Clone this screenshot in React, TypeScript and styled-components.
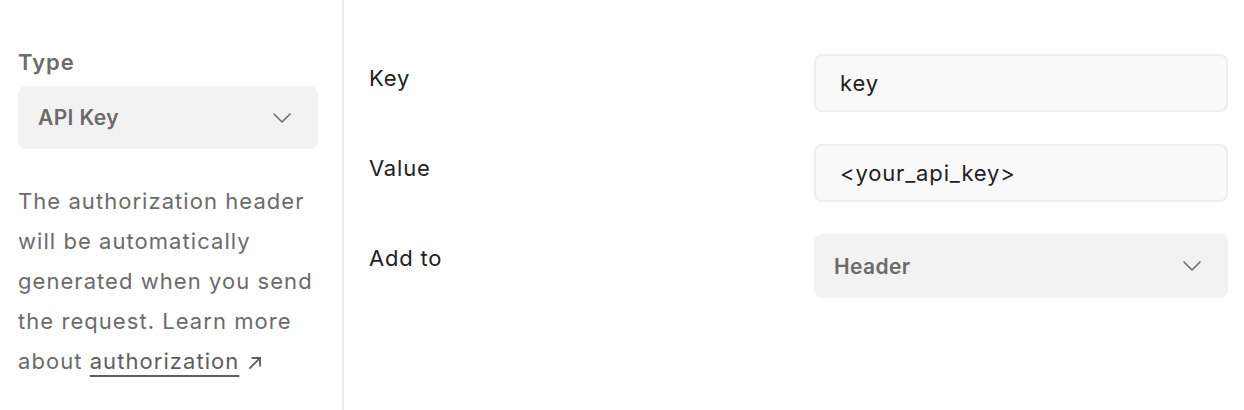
import { FC, Fragment } from "react";
import styled, { createGlobalStyle } from "styled-components";

const GlobalStyle = createGlobalStyle`
  html, body {
    margin: 0;
    padding: 0;
    background: #ffffff;
    font-family: Inter, "Noto Sans", sans-serif;
  }
`;

const Page = styled.div`
  display: flex;
  width: 1244px;
  height: 410px;
  overflow: hidden;
`;

const Sidebar = styled.aside`
  width: 300px;
  padding: 44px 24px 0 18px;
  border-right: 2px solid #ebebeb;
  height: 407px;
  flex-shrink: 0;
`;

const SectionTitle = styled.div`
  font-size: 22px;
  font-weight: 600;
  line-height: 36px;
  letter-spacing: 1px;
  color: #6b6b6b;
  margin-bottom: 6px;
`;

interface ISelectBox {
  height: number;
}
const SelectBox = styled.div<ISelectBox>`
  display: flex;
  align-items: center;
  justify-content: space-between;
  box-sizing: border-box;
  height: ${({ height }) => height}px;
  padding: 0 26px 0 20px;
  background: #f2f2f2;
  border-radius: 8px;
  font-size: 21px;
  font-weight: 600;
  letter-spacing: 0.4px;
  color: #6b6b6b;
`;

const Description = styled.p`
  margin: 32px 0 0;
  font-size: 22px;
  line-height: 40px;
  color: #6b6b6b;
  letter-spacing: 1.05px;

  a {
    color: #5e5e5e;
    text-decoration: underline;
    text-decoration-thickness: 2px;
    text-underline-offset: 6px;
  }
  svg {
    margin-left: 9px;
    vertical-align: -1px;
  }
`;

const Content = styled.section`
  flex: 1;
  display: grid;
  grid-template-columns: 1fr 414px;
  grid-auto-rows: min-content;
  row-gap: 32px;
  padding: 54px 16px 0 25px;
  align-content: start;
`;

const FieldLabel = styled.label`
  font-size: 22px;
  line-height: 48px;
  letter-spacing: 0.8px;
  color: #212121;
`;

const TextInput = styled.div`
  box-sizing: border-box;
  height: 58px;
  display: flex;
  align-items: center;
  padding: 0 24px;
  background: #f9f9f9;
  border: 2px solid #ededed;
  border-radius: 8px;
  font-size: 22px;
  letter-spacing: 0.85px;
  color: #212121;
`;

const Chevron: FC = () => (
  <svg width="20" height="12" viewBox="0 0 20 12" fill="none">
    <polyline
      points="2,2 10,10 18,2"
      stroke="#6b6b6b"
      strokeWidth="1.6"
      strokeLinecap="round"
      strokeLinejoin="round"
    />
  </svg>
);

const ExternalArrow: FC = () => (
  <svg width="14" height="14" viewBox="0 0 14 14" fill="none">
    <path
      d="M2 12 L12 2 M4.5 2 H12 V9.5"
      stroke="#5e5e5e"
      strokeWidth="1.8"
      strokeLinecap="square"
    />
  </svg>
);

const fields = [
  { label: "Key", value: "key" },
  { label: "Value", value: "<your_api_key>" },
];

export default function App() {
  return (
    <>
      <GlobalStyle />
      <Page>
        <Sidebar>
          <SectionTitle>Type</SectionTitle>
          <SelectBox height={63}>
            <span>API Key</span>
            <Chevron />
          </SelectBox>
          <Description>
            The authorization header will be automatically generated when you
            send the request. Learn more about <a href="#">authorization</a>
            <ExternalArrow />
          </Description>
        </Sidebar>
        <Content>
          {fields.map(({ label, value }) => (
            <Fragment key={label}>
              <FieldLabel>{label}</FieldLabel>
              <TextInput>{value}</TextInput>
            </Fragment>
          ))}
          <FieldLabel>Add to</FieldLabel>
          <SelectBox height={64}>
            <span>Header</span>
            <Chevron />
          </SelectBox>
        </Content>
      </Page>
    </>
  );
}
